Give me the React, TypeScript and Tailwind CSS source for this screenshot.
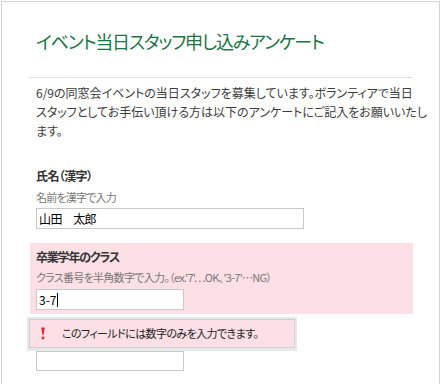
import React from "react";

export default function App() {
  return (
    <div className="w-[442px] h-[384px] bg-white overflow-hidden relative font-['Noto_Sans_CJK_JP',sans-serif] [font-feature-settings:'palt']">
      <div className="ml-px mt-px w-[439px] h-[420px] border-l border-t border-r border-[#d4d4d4]">
        <div className="ml-[27px] w-[384px] flex flex-col relative">
          <div className="mt-[24px] h-[30px] leading-[30px] pl-[7px] text-[18px] text-[#217346] tracking-[-1.2px] whitespace-nowrap">
            イベント当日スタッフ申し込みアンケート
          </div>
          <div className="mt-[21px] h-px bg-[#e1e1e1]" />
          <div className="mt-[5px] pl-[7px] text-[12px] leading-[19px] text-[#3c3c3c] whitespace-nowrap">
            6/9の同窓会イベントの当日スタッフを募集しています。ボランティアで当日
            <br />
            スタッフとしてお手伝い頂ける方は以下のアンケートにご記入をお願いいたし
            <br />
            ます。
          </div>

          <div className="mt-[27px] pl-[7px] h-[18px] leading-[18px] text-[12px] font-bold text-[#333] tracking-[-0.6px]">
            氏名（漢字）
          </div>
          <div className="mt-[3px] pl-[7px] h-[18px] leading-[18px] text-[11px] text-[#777] tracking-[-0.8px]">
            名前を漢字で入力
          </div>
          <div className="mt-[2px] ml-[7px] w-[268px] h-[21px] border border-[#c8c8c8] bg-white pl-[2px] text-[12px] leading-[19px] text-black whitespace-pre tracking-[-0.6px]">
            山田　太郎
          </div>

          <div className="mt-[14px] ml-px w-[383px] bg-[#fde0e5] pl-[6px] pt-[5px] pb-[4px]">
            <div className="h-[18px] leading-[18px] text-[12px] font-bold text-[#333] tracking-[-1.2px]">
              卒業学年のクラス
            </div>
            <div className="mt-[2px] h-[18px] leading-[18px] text-[11px] text-[#777] whitespace-nowrap tracking-[-0.7px]">
              クラス番号を半角数字で入力。（ex.'7'…OK、'3-7'…NG）
            </div>
            <div className="mt-[3px] w-[148px] h-[21px] border border-[#c8c8c8] bg-white pl-[2px] text-[12px] leading-[19px] text-black flex items-center">
              <span>3-7</span>
              <span className="ml-px w-px h-[14px] bg-black" />
            </div>
          </div>

          <div className="mt-[37px] ml-[7px] w-[148px] h-[20px] border border-[#c8c8c8] bg-white" />

          <div className="absolute left-[-2px] top-[315px] w-[270px] h-[34px] bg-[#e8e8e8] p-[2px] pb-[3px]">
            <div className="w-full h-full border border-[#cfcfcf] bg-[#fde0e5] flex items-center">
              <svg width="6" height="13" viewBox="0 0 6 13" className="ml-[10px]">
                <path d="M1.2 0.5 L4.8 0.5 L3.5 8 L2.5 8 Z" fill="#e3262a" />
                <circle cx="3" cy="11" r="1.4" fill="#e3262a" />
              </svg>
              <span className="ml-[16px] text-[11px] text-[#222] whitespace-nowrap tracking-[-0.6px]">
                このフィールドには数字のみを入力できます。
              </span>
            </div>
          </div>
        </div>
      </div>
    </div>
  );
}
